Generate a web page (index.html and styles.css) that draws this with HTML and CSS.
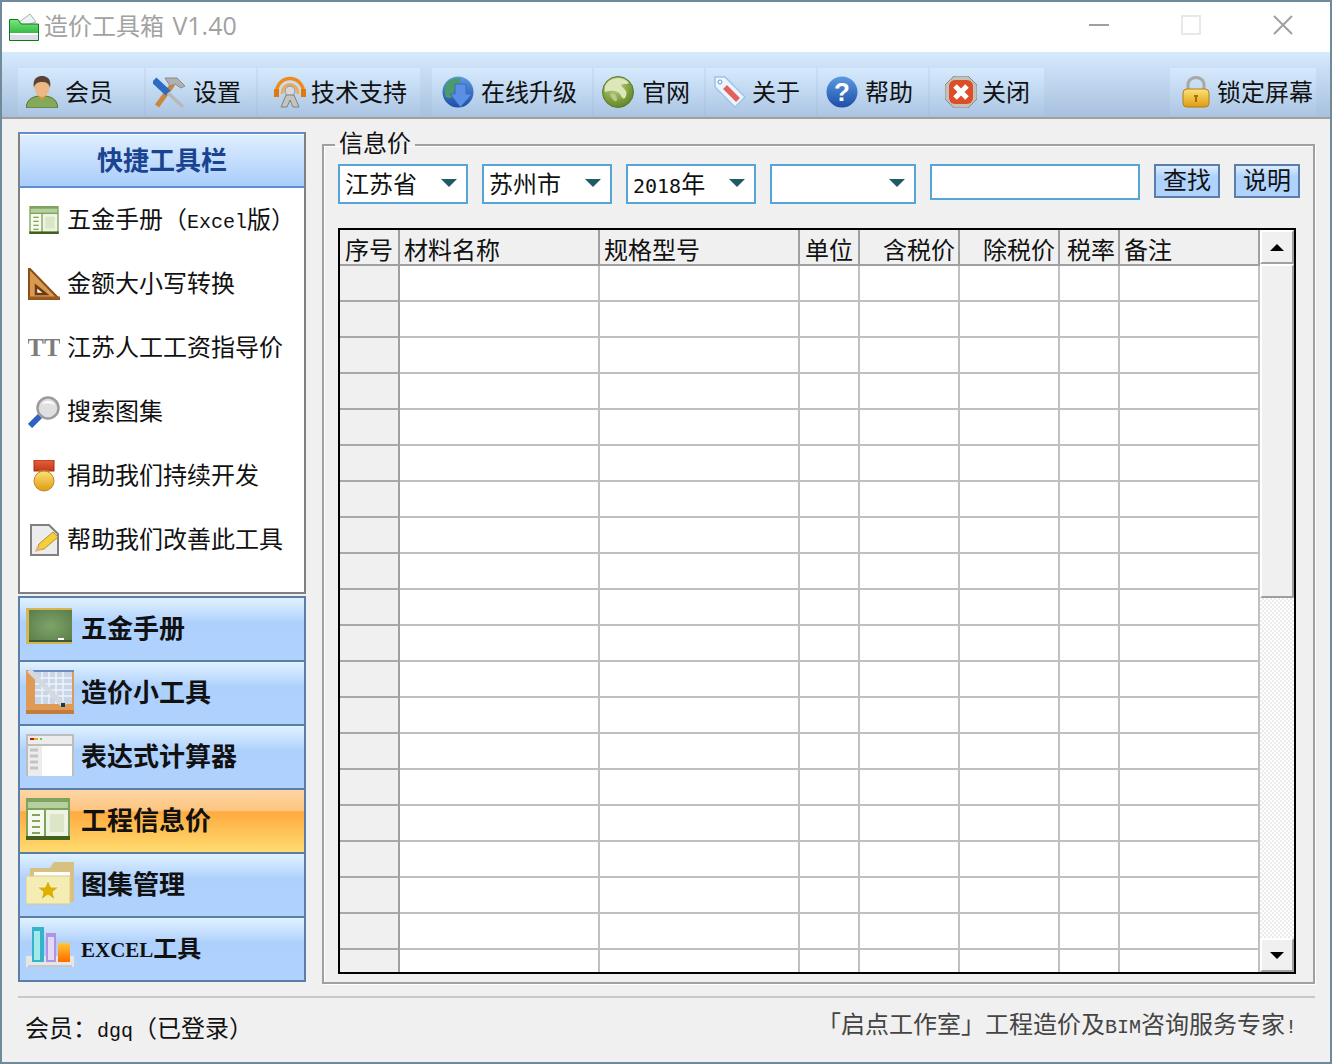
FILE: index.html
```html
<!DOCTYPE html>
<html lang="zh-CN">
<head>
  <meta charset="UTF-8" />
  <title>造价工具箱 V1.40</title>
  <link rel="stylesheet" href="styles.css">
</head>
<body>

  <svg class="defs" width="0" height="0">
    <defs>
      <linearGradient id="gGreen" x1="0" y1="0" x2="0" y2="1"><stop offset="0" stop-color="#7ae87a"/><stop offset="1" stop-color="#12a02c"/></linearGradient>
      <linearGradient id="gGold" x1="0" y1="0" x2="0" y2="1"><stop offset="0" stop-color="#ffe27a"/><stop offset="1" stop-color="#dc9c10"/></linearGradient>
      <linearGradient id="gBlue" x1="0" y1="0" x2="0" y2="1"><stop offset="0" stop-color="#5c9ae0"/><stop offset="1" stop-color="#1c4ea8"/></linearGradient>
      <linearGradient id="gOrange" x1="0" y1="0" x2="0" y2="1"><stop offset="0" stop-color="#ffc830"/><stop offset="1" stop-color="#ff6a00"/></linearGradient>
      <linearGradient id="gRibbon" x1="0" y1="0" x2="0" y2="1"><stop offset="0" stop-color="#e8603a"/><stop offset="1" stop-color="#c03a1c"/></linearGradient>
      <radialGradient id="gEarth" cx="0.4" cy="0.3" r="0.8"><stop offset="0" stop-color="#c4d694"/><stop offset="0.6" stop-color="#7f9f3e"/><stop offset="1" stop-color="#587a24"/></radialGradient>
      <radialGradient id="gBoard" cx="0.5" cy="0.5" r="0.7"><stop offset="0" stop-color="#7ea468"/><stop offset="1" stop-color="#5a7c4a"/></radialGradient>
      <symbol id="iconSheet" viewBox="0 0 44 42">
        <rect width="44" height="42" fill="#7ea35c"/>
        <rect y="38" width="44" height="4" fill="#42621c"/>
        <rect x="2" y="4" width="40" height="6" fill="#b5cf9f"/>
        <rect x="2" y="12" width="16" height="26" fill="#f6f9ee"/>
        <rect x="20" y="12" width="22" height="26" fill="#eef3e2"/>
        <rect x="24" y="16" width="14" height="18" fill="#dbe6c8"/>
        <rect x="6" y="16" width="8" height="2" fill="#86a55a"/>
        <rect x="6" y="22" width="8" height="2" fill="#86a55a"/>
        <rect x="6" y="28" width="8" height="2" fill="#86a55a"/>
        <rect x="6" y="34" width="8" height="2" fill="#86a55a"/>
      </symbol>
    </defs>
  </svg>

  <div class="window">

    <div class="titlebar">
      <svg class="title-icon" viewBox="0 0 30 28">
        <path d="M9 10 L21 1 L27 9 L14 13 Z" fill="#eef2f4" stroke="#a8b0b4"/>
        <path d="M0.5 6.5 H9 L12 11 H29.5 V27.5 H0.5 Z" fill="url(#gGreen)" stroke="#0e7a20"/>
        <rect x="1" y="20" width="28" height="7" fill="#dcdce8"/>
        <rect x="1" y="20" width="28" height="2" fill="#fff"/>
      </svg>
      <span class="title-text">造价工具箱 <span class="title-ver">V1.40</span></span>
      <div class="win-btns">
        <div class="win-btn"><span class="win-min"></span></div>
        <div class="win-btn"><span class="win-max"></span></div>
        <div class="win-btn">
          <svg class="win-close" viewBox="0 0 20 20"><path d="M1 1 L19 19 M19 1 L1 19" stroke="#a0a0a0" stroke-width="2" fill="none"/></svg>
        </div>
      </div>
    </div>

    <div class="toolbar">
      <div class="tool tool-vip">
        <svg class="tool-icon" viewBox="0 0 32 32">
          <path d="M0 32 C1 22 8 20 16 20 C24 20 31 22 32 32 Z" fill="#86a85a" stroke="#52702e"/>
          <path d="M11 19 H21 L16 24 Z" fill="#d99a30"/>
          <ellipse cx="16" cy="12" rx="7.5" ry="9" fill="#eeb886"/>
          <path d="M8 12 C6 2 12 0 16 0 C20 0 26 2 24 12 C23 7 20 6 16 6 C12 6 9 7 8 12 Z" fill="#5a4436"/>
        </svg>
        <span>会员</span>
      </div>
      <div class="tool tool-set">
        <svg class="tool-icon" viewBox="0 0 32 32">
          <path d="M4 30 L20 8" stroke="#c8873c" stroke-width="5" fill="none"/>
          <path d="M12 2 H24 L32 10 L28 12 L22 8 L17 10 Z" fill="#b0b0b0" stroke="#8c8c8c"/>
          <path d="M1 4 L15 17" stroke="#2e6cc4" stroke-width="7" fill="none"/>
          <path d="M15 17 L30 31" stroke="#b8b8b8" stroke-width="3.5" fill="none"/>
        </svg>
        <span>设置</span>
      </div>
      <div class="tool tool-support">
        <svg class="tool-icon" viewBox="0 0 32 32">
          <path d="M2 19 C2 -3 30 -3 30 19" stroke="#f08a1c" stroke-width="3.5" fill="none"/>
          <path d="M8 18 C8 5 24 5 24 18" stroke="#f5a94e" stroke-width="2.5" fill="none"/>
          <circle cx="16" cy="15" r="5" fill="#d8d8d8" stroke="#8c8c8c"/>
          <path d="M12 19 L7 31 H13 L16 24 L19 31 H25 L20 19 Z" fill="#c4c4c0" stroke="#808080"/>
          <rect x="0" y="13" width="5" height="8" fill="#e0780c"/>
          <rect x="27" y="13" width="5" height="8" fill="#e0780c"/>
        </svg>
        <span>技术支持</span>
      </div>
      <div class="tool tool-upgrade">
        <svg class="tool-icon" viewBox="0 0 32 32">
          <circle cx="16" cy="16" r="15.5" fill="url(#gBlue)"/>
          <path d="M3 10 C8 2 14 2 18 2 C20 8 12 10 12 16 C12 22 6 24 3 20 Z" fill="#4a9a6a"/>
          <path d="M13 8 H24 V18 H30 L18.5 31 L8 18 H13 Z" fill="#5b8fe4" stroke="#3c6cc0"/>
        </svg>
        <span>在线升级</span>
      </div>
      <div class="tool tool-site">
        <svg class="tool-icon" viewBox="0 0 32 32">
          <circle cx="16" cy="16" r="15.5" fill="url(#gEarth)" stroke="#5c7c2a"/>
          <path d="M5 7 C10 1 22 0 27 7 C24 9 22 7 19 9 C22 14 26 14 24 20 C22 25 20 22 18 18 C15 14 9 14 3 16 C2 12 3 9 5 7 Z" fill="#dde6ba"/>
          <path d="M8 18 C13 16 15 20 15 24 C14 27 10 24 8 18 Z" fill="#b8cb88"/>
        </svg>
        <span>官网</span>
      </div>
      <div class="tool tool-about">
        <svg class="tool-icon" viewBox="0 0 32 32">
          <path d="M1 1 H11 L31 21 L21 31 L1 11 Z" fill="#eef4fb" stroke="#9cc4ea" stroke-width="1.5"/>
          <circle cx="6" cy="6" r="2" fill="#fff" stroke="#5c94cc"/>
          <path d="M11 11 L24 24" stroke="#e4605c" stroke-width="5.5" fill="none"/>
        </svg>
        <span>关于</span>
      </div>
      <div class="tool tool-help">
        <svg class="tool-icon" viewBox="0 0 32 32">
          <circle cx="16" cy="16" r="15.5" fill="url(#gBlue)"/>
          <text class="help-mark" x="16" y="25">?</text>
        </svg>
        <span>帮助</span>
      </div>
      <div class="tool tool-close">
        <svg class="tool-icon" viewBox="0 0 32 32">
          <path d="M9 0 H23 L32 9 V23 L23 32 H9 L0 23 V9 Z" fill="#c4c0bc" stroke="#8c8884"/>
          <rect x="4" y="4" width="24" height="24" rx="6" fill="#dc4e28"/>
          <path d="M10 10 L22 22 M22 10 L10 22" stroke="#fff" stroke-width="5" fill="none"/>
        </svg>
        <span>关闭</span>
      </div>
      <div class="tool tool-lock">
        <svg class="tool-icon" viewBox="0 0 32 32">
          <path d="M8 15 V9 C8 -1 24 -1 24 9 V15" stroke="#a8a8a8" stroke-width="3" fill="none"/>
          <rect x="3" y="13" width="26" height="18" rx="4" fill="url(#gGold)" stroke="#b87c10"/>
          <path d="M14 19 H18 V21 H17 V26 H15 V21 H14 Z" fill="#a86c08"/>
        </svg>
        <span>锁定屏幕</span>
      </div>
    </div>

    <div class="main">

      <div class="sidebar">
        <div class="quick-title">快捷工具栏</div>
        <ul class="quick-list">
          <li class="quick-item">
            <svg class="quick-icon" viewBox="0 0 32 32"><use href="#iconSheet" x="1" y="2" width="30" height="28"/></svg>
            <span>五金手册（<span class="lat">Excel</span>版）</span>
          </li>
          <li class="quick-item">
            <svg class="quick-icon" viewBox="0 0 32 32">
              <path d="M1 0 L31 31 H1 Z" fill="#d89a50" stroke="#8a4e18" stroke-width="2"/>
              <path d="M8 18 L18 26 H8 Z" fill="#fff" stroke="#6e3c10" stroke-width="2.5"/>
              <path d="M1 30 H32" stroke="#9a5a20" stroke-width="3"/>
            </svg>
            <span>金额大小写转换</span>
          </li>
          <li class="quick-item">
            <svg class="quick-icon" viewBox="0 0 32 32"><text class="tt-mark" x="16" y="24">TT</text></svg>
            <span>江苏人工工资指导价</span>
          </li>
          <li class="quick-item">
            <svg class="quick-icon" viewBox="0 0 32 32">
              <path d="M2 30 L12 20" stroke="#2f62c0" stroke-width="6" fill="none"/>
              <circle cx="20" cy="12" r="10.5" fill="#e0e0e0" stroke="#9c9c9c" stroke-width="2.5"/>
              <path d="M14 8 C17 4 24 4 27 9 C22 7 18 7 14 8 Z" fill="#fff"/>
            </svg>
            <span>搜索图集</span>
          </li>
          <li class="quick-item">
            <svg class="quick-icon" viewBox="0 0 32 32">
              <rect x="6" y="0" width="20" height="11" fill="url(#gRibbon)" stroke="#b02a14"/>
              <rect x="11" y="10" width="10" height="5" fill="#b8751c"/>
              <circle cx="16" cy="21" r="10" fill="url(#gGold)" stroke="#c08a20"/>
            </svg>
            <span>捐助我们持续开发</span>
          </li>
          <li class="quick-item">
            <svg class="quick-icon" viewBox="0 0 32 32">
              <path d="M3 1 H21 L30 10 V31 H3 Z" fill="#ececec" stroke="#808080" stroke-width="2"/>
              <path d="M9 26 L11 20 L25 8 L30 13 L16 25 Z" fill="#f4cf3c" stroke="#c08c30"/>
              <path d="M7 28 L9 22 L14 26 Z" fill="#e8b080"/>
            </svg>
            <span>帮助我们改善此工具</span>
          </li>
        </ul>
        <div class="nav">
          <div class="nav-item">
            <svg class="nav-icon" viewBox="0 0 48 48">
              <rect x="0" y="4" width="46" height="36" fill="#d4b654"/>
              <rect x="3" y="6" width="43" height="32" fill="url(#gBoard)"/>
              <rect x="3" y="36" width="43" height="2" fill="#3e5a34"/>
              <rect x="32" y="34" width="6" height="2" fill="#fff"/>
            </svg>
            <span>五金手册</span>
          </div>
          <div class="nav-item">
            <svg class="nav-icon" viewBox="0 0 48 48">
              <path d="M0 2 H48 V46 H0 Z" fill="#e09a58"/>
              <rect x="9" y="4" width="37" height="32" fill="#c8d6e8"/>
              <path d="M2 3 H48" stroke="#6a8cc0" stroke-width="2"/>
              <path d="M9 10 H46 M9 16 H46 M9 22 H46 M9 28 H46 M16 4 V36 M23 4 V36 M30 4 V36 M37 4 V36" stroke="#eef3fa" stroke-width="1.5" fill="none"/>
              <path d="M0 44 H48" stroke="#c47c3c" stroke-width="4"/>
              <path d="M3 2 L38 38" stroke="#d4dade" stroke-width="5" fill="none"/>
              <rect x="35" y="35" width="4" height="4" fill="#1c3a4a"/>
            </svg>
            <span>造价小工具</span>
          </div>
          <div class="nav-item">
            <svg class="nav-icon" viewBox="0 0 48 48">
              <rect x="0" y="2" width="48" height="42" fill="#bdbdbd"/>
              <rect x="2" y="4" width="44" height="8" fill="#ececec"/>
              <rect x="4" y="6" width="4" height="2" fill="#c8141c"/>
              <rect x="8" y="6" width="4" height="2" fill="#e4b410"/>
              <rect x="14" y="6" width="2" height="2" fill="#80c040"/>
              <rect x="2" y="14" width="14" height="30" fill="#ececec"/>
              <path d="M4 18 H12 M4 24 H12 M4 30 H12 M4 36 H12" stroke="#c4c4c4" stroke-width="3"/>
              <rect x="16" y="14" width="30" height="30" fill="#fff"/>
            </svg>
            <span>表达式计算器</span>
          </div>
          <div class="nav-item active">
            <svg class="nav-icon" viewBox="0 0 48 48"><use href="#iconSheet" y="2" width="44" height="42"/></svg>
            <span>工程信息价</span>
          </div>
          <div class="nav-item">
            <svg class="nav-icon" viewBox="0 0 48 48">
              <path d="M4 8 H24 L28 2 H48 V42 H4 Z" fill="#d8c080"/>
              <rect x="8" y="12" width="36" height="14" fill="#fff"/>
              <rect x="0" y="16" width="44" height="28" fill="#f3edb4" stroke="#dcc98a"/>
              <path d="M22 20 L25 27 L33 27 L27 32 L29 40 L22 35 L15 40 L17 32 L11 27 L19 27 Z" fill="#e0b000" stroke="#f5f0d4"/>
            </svg>
            <span>图集管理</span>
          </div>
          <div class="nav-item">
            <svg class="nav-icon" viewBox="0 0 48 48">
              <rect x="0" y="32" width="48" height="11" fill="#e6e6e6"/>
              <rect x="2" y="41" width="44" height="2" fill="#c8c8c8"/>
              <rect x="6" y="3" width="12" height="35" fill="#34b4c8"/>
              <rect x="8" y="7" width="6" height="29" fill="#a4e8ec"/>
              <rect x="20" y="9" width="10" height="29" fill="#b094e4"/>
              <rect x="22" y="13" width="6" height="23" fill="#e4d8f4"/>
              <rect x="32" y="19" width="12" height="19" fill="url(#gOrange)"/>
            </svg>
            <span class="nav-excel"><span class="lat-bold">EXCEL</span>工具</span>
          </div>
        </div>
      </div>

      <fieldset class="panel">
        <legend class="panel-title">信息价</legend>
        <div class="filters">
          <div class="combo combo-1"><span>江苏省</span><i class="combo-arrow"></i></div>
          <div class="combo combo-1"><span>苏州市</span><i class="combo-arrow"></i></div>
          <div class="combo combo-1"><span><span class="lat-num">2018</span>年</span><i class="combo-arrow"></i></div>
          <div class="combo combo-2"><span></span><i class="combo-arrow"></i></div>
          <div class="search-box"></div>
          <div class="btn">查找</div>
          <div class="btn">说明</div>
        </div>

        <div class="grid">
          <div class="grid-body">
            <table class="data">
              <colgroup>
                <col class="col-s"><col class="col-l"><col class="col-l"><col class="col-s">
                <col class="col-m"><col class="col-m"><col class="col-s"><col class="col-r">
              </colgroup>
              <thead>
                <tr>
                  <th class="first">序号</th><th>材料名称</th><th>规格型号</th><th class="first">单位</th>
                  <th class="num">含税价</th><th class="num">除税价</th><th class="num">税率</th><th>备注</th>
                </tr>
              </thead>
              <tbody>
                <tr><td class="rowhead"></td><td></td><td></td><td></td><td></td><td></td><td></td><td></td></tr>
                <tr><td class="rowhead"></td><td></td><td></td><td></td><td></td><td></td><td></td><td></td></tr>
                <tr><td class="rowhead"></td><td></td><td></td><td></td><td></td><td></td><td></td><td></td></tr>
                <tr><td class="rowhead"></td><td></td><td></td><td></td><td></td><td></td><td></td><td></td></tr>
                <tr><td class="rowhead"></td><td></td><td></td><td></td><td></td><td></td><td></td><td></td></tr>
                <tr><td class="rowhead"></td><td></td><td></td><td></td><td></td><td></td><td></td><td></td></tr>
                <tr><td class="rowhead"></td><td></td><td></td><td></td><td></td><td></td><td></td><td></td></tr>
                <tr><td class="rowhead"></td><td></td><td></td><td></td><td></td><td></td><td></td><td></td></tr>
                <tr><td class="rowhead"></td><td></td><td></td><td></td><td></td><td></td><td></td><td></td></tr>
                <tr><td class="rowhead"></td><td></td><td></td><td></td><td></td><td></td><td></td><td></td></tr>
                <tr><td class="rowhead"></td><td></td><td></td><td></td><td></td><td></td><td></td><td></td></tr>
                <tr><td class="rowhead"></td><td></td><td></td><td></td><td></td><td></td><td></td><td></td></tr>
                <tr><td class="rowhead"></td><td></td><td></td><td></td><td></td><td></td><td></td><td></td></tr>
                <tr><td class="rowhead"></td><td></td><td></td><td></td><td></td><td></td><td></td><td></td></tr>
                <tr><td class="rowhead"></td><td></td><td></td><td></td><td></td><td></td><td></td><td></td></tr>
                <tr><td class="rowhead"></td><td></td><td></td><td></td><td></td><td></td><td></td><td></td></tr>
                <tr><td class="rowhead"></td><td></td><td></td><td></td><td></td><td></td><td></td><td></td></tr>
                <tr><td class="rowhead"></td><td></td><td></td><td></td><td></td><td></td><td></td><td></td></tr>
                <tr><td class="rowhead"></td><td></td><td></td><td></td><td></td><td></td><td></td><td></td></tr>
                <tr><td class="rowhead"></td><td></td><td></td><td></td><td></td><td></td><td></td><td></td></tr>
              </tbody>
            </table>
          </div>
          <div class="scroll">
            <div class="scroll-btn"><i class="arrow-up"></i></div>
            <div class="scroll-thumb"></div>
            <div class="scroll-track"></div>
            <div class="scroll-btn"><i class="arrow-down"></i></div>
          </div>
        </div>
      </fieldset>

    </div>

    <div class="statusbar">
      <span class="status-user">会员：<span class="lat">dgq</span>（已登录）</span>
      <span class="status-slogan">「启点工作室」工程造价及<span class="lat">BIM</span>咨询服务专家<span class="lat">!</span></span>
    </div>

  </div>

</body>
</html>
```

FILE: styles.css
```css
* {
  box-sizing: border-box;
}

html, body {
  margin: 0;
  height: 100%;
}

body {
  font-family: "Noto Sans CJK SC", "Liberation Sans", sans-serif;
  font-size: 24px;
  color: #111;
  background: #f0f0f0;
}

.defs {
  display: block;
}

.lat {
  font-family: "Liberation Mono", monospace;
  font-size: 20px;
}
.lat-num {
  font-family: "DejaVu Sans Mono", monospace;
  font-size: 20px;
}

.window {
  height: 1064px;
  display: flex;
  flex-direction: column;
  border: 2px solid #6f8a98;
  background: #f0f0f0;
}

/* title bar */
.titlebar {
  height: 50px;
  flex: none;
  display: flex;
  align-items: center;
  background: #fff;
  padding-left: 7px;
}
.title-icon {
  width: 30px;
  height: 28px;
  margin-right: 5px;
}
.title-text {
  color: #a2a2a2;
  line-height: 1;
  margin-bottom: 4px;
}
.title-ver {
  margin-left: 3px;
  font-family: "Open Sans", sans-serif;
  font-size: 25px;
}
.win-btns {
  margin: 0 1px 4px auto;
  display: flex;
}
.win-btn {
  width: 92px;
  height: 46px;
  display: flex;
  align-items: center;
  justify-content: center;
}
.win-min {
  width: 20px;
  height: 2px;
  background: #a0a0a0;
}
.win-max {
  width: 20px;
  height: 20px;
  border: 2px solid #e8e8e8;
}
.win-close {
  width: 20px;
  height: 20px;
}

/* toolbar */
.toolbar {
  height: 67px;
  flex: none;
  display: flex;
  gap: 2px;
  padding: 16px 14px 1px 16px;
  background: linear-gradient(#d6eafe, #a8c0de);
  border-bottom: 2px solid #a0a0a0;
}
.tool {
  height: 48px;
  display: flex;
  align-items: center;
  background: linear-gradient(#d6eafd, #abc5e3);
}
.tool span {
  margin-bottom: 4px;
}
.tool-icon {
  width: 32px;
  height: 32px;
  flex: none;
}
.tool-vip { width: 126px; padding-left: 8px; gap: 7px; }
.tool-set { width: 110px; padding-left: 7px; gap: 8px; }
.tool-support { width: 162px; padding-left: 16px; gap: 5px; }
.tool-upgrade { width: 160px; padding-left: 10px; gap: 7px; margin-left: 10px; }
.tool-site { width: 110px; padding-left: 8px; gap: 8px; }
.tool-about { width: 110px; padding-left: 8px; gap: 6px; }
.tool-help { width: 110px; padding-left: 8px; gap: 7px; }
.tool-close { width: 114px; padding-left: 15px; gap: 5px; }
.tool-lock { width: 146px; padding-left: 10px; gap: 5px; margin-left: auto; }
.help-mark {
  font-family: "Liberation Sans", sans-serif;
  font-size: 26px;
  font-weight: bold;
  fill: #fff;
  text-anchor: middle;
}

/* main area */
.main {
  flex: none;
  display: flex;
  gap: 16px;
  padding: 13px 15px 0 16px;
}

.sidebar {
  width: 288px;
  flex: none;
}
.quick-title {
  height: 56px;
  display: flex;
  align-items: center;
  justify-content: center;
  padding-bottom: 4px;
  font-size: 26px;
  font-weight: bold;
  color: #1a4490;
  background: linear-gradient(#e0effe, #a9cdfb);
  border: 2px solid #5f8fcf;
  border-left-color: #808080;
  border-right-color: #808080;
  box-shadow: inset 0 1px 0 #fff;
}
.quick-list {
  list-style: none;
  margin: 0 0 2px;
  padding: 0;
  height: 406px;
  background: #fff;
  border: 2px solid #808080;
  border-top: none;
}
.quick-item {
  height: 64px;
  display: flex;
  align-items: center;
  gap: 7px;
  padding-left: 8px;
}
.quick-item > span {
  margin-bottom: 5px;
}
.quick-icon {
  width: 32px;
  height: 32px;
  flex: none;
}
.tt-mark {
  font-family: "Liberation Serif", serif;
  font-size: 25px;
  font-weight: bold;
  fill: #7c7c7c;
  text-anchor: middle;
}

.nav {
  border: 2px solid #5b7ea8;
}
.nav-item {
  height: 64px;
  display: flex;
  align-items: center;
  gap: 7px;
  padding-left: 6px;
  padding-bottom: 2px;
  font-size: 26px;
  font-weight: bold;
  background: linear-gradient(#e0f2ff, #b4d4fd 36%, #add0fd 37%, #b0d2fd);
  border-bottom: 2px solid #5b7ea8;
}
.nav-item > span {
  margin-bottom: 4px;
}
.nav-item:last-child {
  height: 62px;
  border-bottom: none;
}
.nav-item.active {
  background: linear-gradient(#fed6a4, #fdc47e 34%, #ffaa3e 35%, #ffdc70);
}
.nav-icon {
  width: 48px;
  height: 48px;
  flex: none;
}
.nav-excel {
  font-size: 24px;
}
.lat-bold {
  font-family: "Liberation Serif", serif;
  font-size: 21px;
}

/* right panel */
.panel {
  width: 993px;
  height: 852px;
  margin: 0;
  padding: 6px 0 0 14px;
  min-width: 0;
  border: 2px solid #a0a0a0;
  box-shadow: 1px 1px 0 #fff, inset 1px 1px 0 #fff;
}
.panel-title {
  margin-left: -3px;
  padding: 0 4px;
  height: 26px;
  line-height: 20px;
}

.filters {
  display: flex;
  align-items: flex-start;
  gap: 14px;
  height: 40px;
}
.combo {
  height: 40px;
  display: flex;
  align-items: center;
  justify-content: space-between;
  padding: 0 9px 0 5px;
  background: #fff;
  border: 2px solid #55a5d8;
}
.combo > span {
  margin-bottom: 4px;
}
.combo-1 { width: 130px; }
.combo-2 { width: 146px; }
.combo-arrow {
  width: 0;
  height: 0;
  border-left: 8px solid transparent;
  border-right: 8px solid transparent;
  border-top: 8px solid #1f5a66;
  margin-top: -2px;
}
.search-box {
  width: 210px;
  height: 36px;
  background: #fff;
  border: 2px solid #55a5d8;
}
.btn {
  width: 66px;
  height: 34px;
  display: flex;
  align-items: center;
  justify-content: center;
  padding-bottom: 4px;
  line-height: 1;
  background: linear-gradient(#dcecfe, #b0d3fd 35%, #b0d3fd);
  border: 2px solid #5b7ea8;
}

/* data grid */
.grid {
  width: 958px;
  height: 746px;
  margin-top: 24px;
  display: flex;
  border: 2px solid #000;
  background: #f0f0f0;
}
.grid-body {
  width: 920px;
  height: 742px;
  overflow: hidden;
  background: #fff;
}
.data {
  width: 920px;
  table-layout: fixed;
  border-collapse: separate;
  border-spacing: 0;
}
.col-s { width: 60px; }
.col-l { width: 200px; }
.col-m { width: 100px; }
.col-r { width: 140px; }
.data th {
  height: 36px;
  padding: 3px 3px 0 4px;
  font-weight: normal;
  text-align: left;
  line-height: 1;
  white-space: nowrap;
  background: #f0f0f0;
  border-right: 2px solid #a0a0a0;
  border-bottom: 2px solid #a0a0a0;
}
.data th.first {
  padding-left: 5px;
}
.data th.num {
  text-align: right;
}
.data td {
  height: 36px;
  padding: 0;
  border-right: 2px solid #c0c0c0;
  border-bottom: 2px solid #c0c0c0;
}
.data td.rowhead {
  background: #f0f0f0;
  border-right-color: #a0a0a0;
  border-bottom-color: #a8a8a8;
}

.scroll {
  width: 34px;
  display: flex;
  flex-direction: column;
}
.scroll-btn {
  height: 34px;
  flex: none;
  display: flex;
  align-items: center;
  justify-content: center;
  background: #f0f0f0;
  border: 2px solid;
  border-color: #fff #a0a0a0 #a0a0a0 #fff;
}
.arrow-up {
  width: 0;
  height: 0;
  border-left: 7px solid transparent;
  border-right: 7px solid transparent;
  border-bottom: 7px solid #000;
}
.arrow-down {
  width: 0;
  height: 0;
  border-left: 7px solid transparent;
  border-right: 7px solid transparent;
  border-top: 7px solid #000;
}
.scroll-thumb {
  height: 334px;
  flex: none;
  background: #f0f0f0;
  border: 2px solid;
  border-color: #fff #a0a0a0 #a0a0a0 #fff;
}
.scroll-track {
  flex: 1;
  background-color: #fff;
  background-image: conic-gradient(#ececec 25%, #fff 0 50%, #ececec 0 75%, #fff 0);
  background-size: 4px 4px;
}

/* status bar */
.statusbar {
  flex: 1;
  margin: 12px 15px 0 16px;
  padding: 0 18px 0 7px;
  display: flex;
  justify-content: space-between;
  align-items: center;
  border-top: 2px solid #c8c8c8;
}
.status-user {
  padding-bottom: 8px;
}
.status-slogan {
  padding-bottom: 16px;
  color: #444;
}
```
